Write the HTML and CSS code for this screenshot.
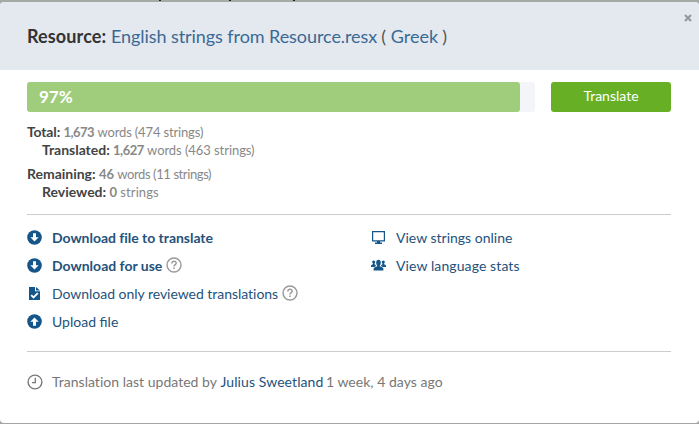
FILE: index.html
```html
<!DOCTYPE html>
<html lang="en">
<head>
<meta charset="utf-8">
<title>Resource</title>
<link rel="stylesheet" href="styles.css">
</head>
<body>
<div class="page-strip"><i class="tail tail-p"></i><i class="tail tail-y"></i><i class="tail tail-y2"></i></div>
<main class="modal">
  <header class="head">
    <h1><b>Resource:</b> <a class="res">English strings from Resource.resx</a> <span class="paren">(</span> <a class="lang">Greek</a> <span class="paren">)</span></h1>
    <button class="close" aria-label="Close"><svg width="8" height="8" viewBox="0 0 8 8"><path d="M1 1L7 7M7 1L1 7" stroke="#969a9f" stroke-width="2.3"/></svg></button>
  </header>
  <section class="body">
    <div class="top">
      <div class="progress"><div class="bar" style="width:493px">97%</div></div>
      <button class="translate">Translate</button>
    </div>
    <div class="stats">
      <p class="s1"><b>Total:</b> <strong>1,673</strong> <span>words (474 strings)</span></p>
      <p class="s2 sub"><b>Translated:</b> <strong>1,627</strong> <span>words (463 strings)</span></p>
      <p class="s3"><b>Remaining:</b> <strong>46</strong> <span>words (11 strings)</span></p>
      <p class="s4 sub"><b>Reviewed:</b> <strong>0</strong> <span>strings</span></p>
    </div>
    <div class="links">
      <ul>
        <li><svg class="icon" viewBox="0 0 15 15"><circle cx="7.5" cy="7.5" r="7.3" fill="#14558a"/><path d="M6 3.2h3v4h2.7L7.5 11.6 3.3 7.2H6z" fill="#fff"/></svg><a class="bold l1">Download file to translate</a></li>
        <li><svg class="icon" viewBox="0 0 15 15"><circle cx="7.5" cy="7.5" r="7.3" fill="#14558a"/><path d="M6 3.2h3v4h2.7L7.5 11.6 3.3 7.2H6z" fill="#fff"/></svg><a class="bold l2">Download for use</a><svg class="help" viewBox="0 0 16 16"><circle cx="8" cy="8" r="7" fill="none" stroke="#999" stroke-width="1.4"/><path d="M5.8 6.4C5.8 3.5 10.3 3.7 10.2 6.2C10.1 7.7 8 7.7 8 9.5M8 10.6V12" fill="none" stroke="#999" stroke-width="1.5"/></svg></li>
        <li><svg class="icon" viewBox="0 0 15 15"><path d="M2 1h6v4.2h5V14H2zM9 1l4 3.5H9z" fill="#14558a"/><path d="M4.2 9.2l2.3 2.3 4.3-4.4" fill="none" stroke="#fff" stroke-width="1.8"/></svg><a class="l3">Download only reviewed translations</a><svg class="help" viewBox="0 0 16 16"><circle cx="8" cy="8" r="7" fill="none" stroke="#999" stroke-width="1.4"/><path d="M5.8 6.4C5.8 3.5 10.3 3.7 10.2 6.2C10.1 7.7 8 7.7 8 9.5M8 10.6V12" fill="none" stroke="#999" stroke-width="1.5"/></svg></li>
        <li><svg class="icon" viewBox="0 0 15 15"><circle cx="7.5" cy="7.5" r="7.3" fill="#14558a"/><path d="M6 11.8h3v-4h2.7L7.5 3.4 3.3 7.8H6z" fill="#fff"/></svg><a class="l4">Upload file</a></li>
      </ul>
      <ul>
        <li><svg class="icon" viewBox="0 0 15 15"><path d="M1.6 1.6h11.800v9.300H1.600z" fill="none" stroke="#14558a" stroke-width="1.200"/><path d="M6 11h3v1.500h2V14H4v-1.500h2z" fill="#14558a"/></svg><a class="l5">View strings online</a></li>
        <li><svg class="icon people" viewBox="0 0 17 15" fill="#14558a"><circle cx="3.700" cy="4" r="1.600"/><circle cx="13.300" cy="4" r="1.600"/><ellipse cx="8.5" cy="4.700" rx="2.300" ry="2.900"/><path d="M1 9V7.600Q1.500 6.500 3 6.300V5h1.500v1.300Q5.500 6.600 6 8L4.300 9zM16 9V7.600Q15.500 6.500 14 6.300V5h-1.500v1.300Q11.500 6.600 11 8L12.700 9zM3.600 12.500V10.500Q4 9 7.200 8.300V7h2.600v1.300Q13 9 13.400 10.500v2z"/></svg><a class="l6">View language stats</a></li>
      </ul>
    </div>
    <footer class="updated">
      <svg class="clock" viewBox="0 0 16 16"><circle cx="8" cy="8" r="6.900" fill="none" stroke="#777" stroke-width="1.400"/><path d="M8.300 3.800V8.700H5" fill="none" stroke="#777" stroke-width="1.300"/></svg>
      <p><span class="u1">Translation last updated by</span> <a class="u2">Julius Sweetland</a> <span class="u3">1 week, 4 days ago</span></p>
    </footer>
  </section>
</main>
</body>
</html>
```
FILE: styles.css
```css
* { box-sizing: border-box; }
body { margin: 0; width: 699px; height: 424px; overflow: hidden; background: #a4a4a4; font-family: Lato, "Open Sans", sans-serif; font-size: 14px; color: #777; }
h1, p, ul { margin: 0; padding: 0; }
li { list-style: none; }
button { border: 0; padding: 0; font: inherit; }
a { color: #24527c; }
.page-strip { height: 2px; background: #a5aaa7; position: relative; }
.tail { position: absolute; top: 0; width: 2px; height: 1px; background: #222; }
.tail-p { left: 159px; }
.tail-y { left: 229px; }
.tail-y2 { left: 293px; }
.modal { height: 421px; background: #fff; border-radius: 4px; overflow: hidden; }
.head { height: 68px; background: #e4e8ef; position: relative; padding: 22px 27px 0; }
.head h1 { font-size: 18px; line-height: 24px; font-weight: 400; white-space: nowrap; color: #555; }
.head b { color: #333; letter-spacing: .12px; }
.res { letter-spacing: -.07px; }
.paren { margin-left: -.5px; }
.head a { color: #3a6a94; }
.close { position: absolute; left: 684px; top: 12px; width: 8px; height: 8px; background: none; line-height: 0; }
.body { padding: 12px 28px 0 27px; }
.top { display: flex; justify-content: space-between; }
.progress { width: 508px; height: 30px; background: #f4f5f9; border-radius: 3px; }
.bar { height: 30px; line-height: 30px; padding-left: 12px; background: #a0cd7b; border-radius: 3px; color: #fff; font-size: 17px; font-weight: 700; }
.translate { width: 120px; height: 30px; padding-bottom: 2px; line-height: 28px; background: #67b026; border-radius: 3px; color: #fff; font-size: 14px; }
.stats { padding-top: 11px; height: 102px; font-size: 13px; line-height: 18px; color: #888; white-space: nowrap; }
.stats p { height: 18px; }
.stats b { color: #444; font-size: 14px; letter-spacing: -.02px; }
.stats strong { color: #888; letter-spacing: -.5px; }
.stats span { letter-spacing: -.06px; }
.stats .s1 b { letter-spacing: -.15px; }
.stats .s1 span { letter-spacing: -.15px; }
.stats .s3 strong, .stats .s4 strong { letter-spacing: 0; }
.stats .s3 span { letter-spacing: -.4px; }
.stats .s4 span { letter-spacing: .1px; }
.sub { padding-left: 15px; }
.s3 { margin-top: 6px; }
.links { display: grid; grid-template-columns: 344px 1fr; height: 138px; padding-top: 8px; border-top: 1px solid #ccc; border-bottom: 1px solid #ccc; }
.links li { height: 28px; display: flex; align-items: center; white-space: nowrap; }
.icon { width: 15px; height: 15px; margin-right: 10px; flex: none; }
.people { width: 17px; margin: 0 9px 0 -1px; }
.help { width: 16px; height: 16px; margin-left: 4px; }
.bold { font-weight: 700; }
.l1, .l3 { letter-spacing: -.03px; }
.l6 { letter-spacing: .1px; }
.u1 { letter-spacing: .02px; }
.u2 { letter-spacing: .08px; }
.u3 { margin-left: -1px; letter-spacing: .03px; }
.updated { display: flex; align-items: center; padding-top: 20px; line-height: 20px; white-space: nowrap; }
.clock { width: 16px; height: 16px; margin-right: 9px; }
```
